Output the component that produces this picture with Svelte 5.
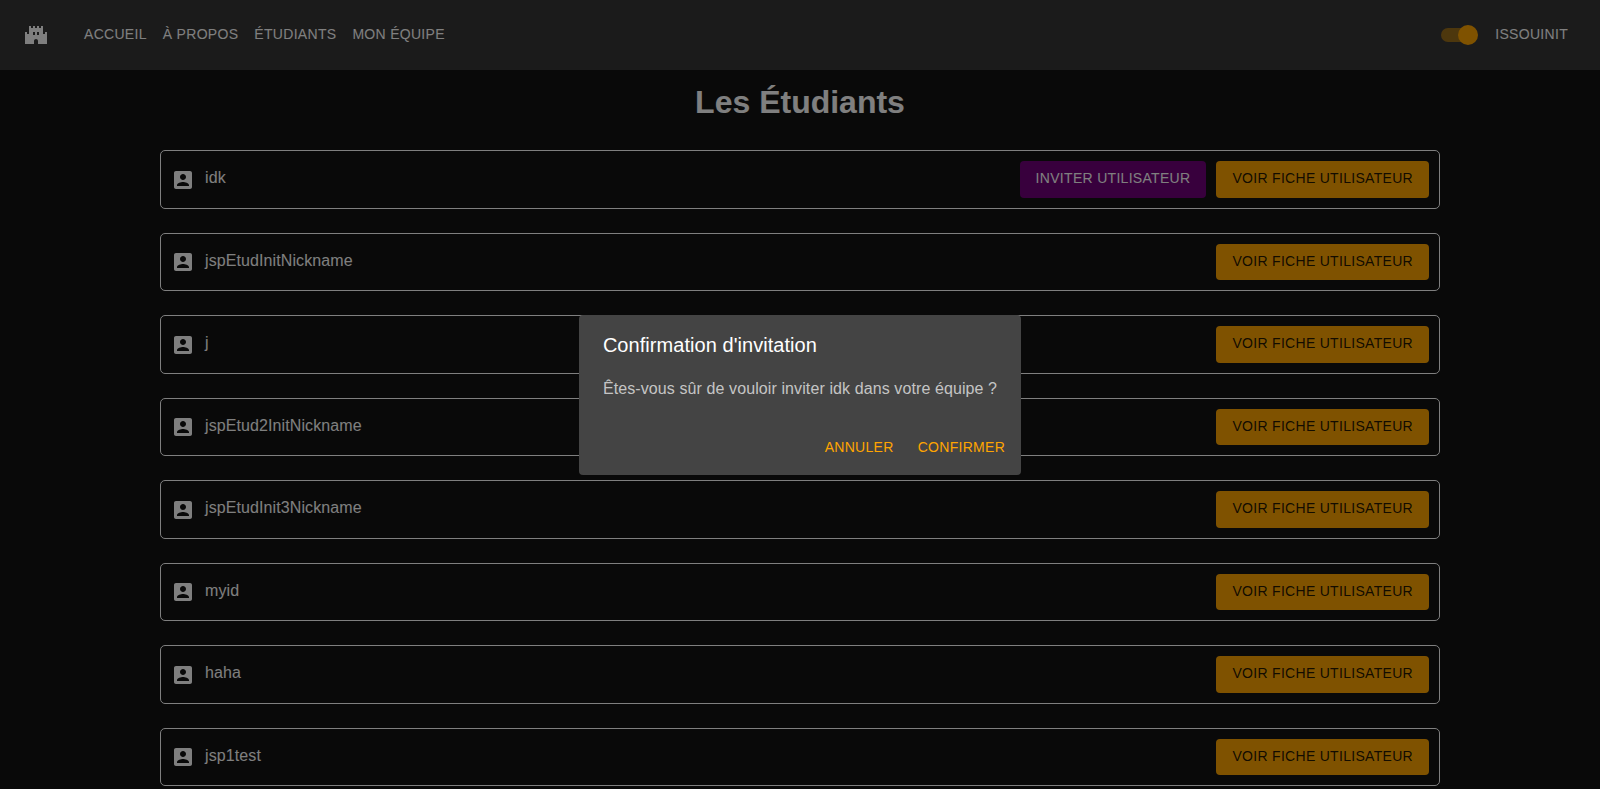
<script>
  const links = ['Accueil', 'À propos', 'Étudiants', 'Mon équipe'];
  const students = [
    { name: 'idk', invite: true },
    { name: 'jspEtudInitNickname' },
    { name: 'j' },
    { name: 'jspEtud2InitNickname' },
    { name: 'jspEtudInit3Nickname' },
    { name: 'myid' },
    { name: 'haha' },
    { name: 'jsp1test' },
  ];
</script>

<div class="page">
  <header class="appbar">
    <svg class="logo" viewBox="0 0 24 24" aria-hidden="true">
      <path d="M21 9v2h-2V3h-2v2h-2V3h-2v2h-2V3H9v2H7V3H5v8H3V9H1v12h9v-3c0-1.1.9-2 2-2s2 .9 2 2v3h9V9h-2zm-10 3H9V9h2v3zm4 0h-2V9h2v3z" />
    </svg>
    <nav class="nav">
      {#each links as link}
        <button class="nav-btn">{link}</button>
      {/each}
    </nav>
    <span class="switch">
      <span class="track"></span>
      <span class="thumb"></span>
    </span>
    <button class="nav-btn">IssouInit</button>
  </header>

  <main class="content">
    <h1 class="title">Les Étudiants</h1>
    <ul class="list">
      {#each students as s}
        <li class="row">
          <div class="who">
            <svg class="avatar" viewBox="0 0 24 24" aria-hidden="true">
              <path d="M19 3H5c-1.11 0-2 .9-2 2v14c0 1.1.89 2 2 2h14c1.1 0 2-.9 2-2V5c0-1.1-.9-2-2-2zm-7 3c1.65 0 3 1.35 3 3 0 1.66-1.35 3-3 3s-3-1.34-3-3c0-1.65 1.35-3 3-3zm6 12H6v-1c0-2 4-3.1 6-3.1s6 1.1 6 3.1v1z" />
            </svg>
            <span class="name">{s.name}</span>
          </div>
          <div class="actions">
            {#if s.invite}
              <button class="btn purple">Inviter utilisateur</button>
            {/if}
            <button class="btn orange">Voir fiche utilisateur</button>
          </div>
        </li>
      {/each}
    </ul>
  </main>
</div>

<div class="backdrop">
  <div class="dialog" role="dialog">
    <h2 class="dialog-title">Confirmation d'invitation</h2>
    <p class="dialog-text">Êtes-vous sûr de vouloir inviter idk dans votre équipe ?</p>
    <div class="dialog-actions">
      <button class="text-btn">Annuler</button>
      <button class="text-btn">Confirmer</button>
    </div>
  </div>
</div>

<style>
  :global(body) {
    margin: 0;
    background: #121212;
    overflow: hidden;
    font-family: "Liberation Sans", Arial, sans-serif;
  }

  button {
    font-family: inherit;
    font-size: 14px;
    line-height: 24.5px;
    letter-spacing: 0.3px;
    text-transform: uppercase;
    border: none;
    background: none;
    cursor: pointer;
  }

  .page {
    height: 789px;
    overflow: hidden;
    color: #fff;
  }

  .appbar {
    height: 70px;
    box-sizing: border-box;
    padding: 0 24px;
    display: flex;
    align-items: center;
    background: #363636;
  }

  .logo {
    width: 24px;
    height: 24px;
    fill: #fff;
    margin-right: 28px;
    flex-shrink: 0;
  }

  .nav {
    display: flex;
    flex: 1;
    margin-bottom: 1px;
  }

  .nav-btn {
    color: #fff;
    padding: 6px 8px;
    margin-bottom: 1px;
  }

  .nav .nav-btn {
    margin-bottom: 0;
  }

  .switch {
    position: relative;
    width: 58px;
    height: 38px;
    flex-shrink: 0;
  }

  .track {
    position: absolute;
    left: 12px;
    top: 12px;
    width: 34px;
    height: 14px;
    border-radius: 7px;
    background: #ffa500;
    opacity: 0.5;
  }

  .thumb {
    position: absolute;
    left: 29px;
    top: 9px;
    width: 20px;
    height: 20px;
    border-radius: 50%;
    background: #ffa500;
  }

  .content {
    padding: 0 160px;
  }

  .title {
    margin: 11px 0 27px;
    font-size: 32px;
    line-height: 42px;
    font-weight: 700;
    text-align: center;
  }

  .list {
    list-style: none;
    margin: 0;
    padding: 0;
    display: flex;
    flex-direction: column;
    gap: 24px;
  }

  .row {
    display: flex;
    align-items: center;
    justify-content: space-between;
    padding: 10px;
    border: 1px solid #fff;
    border-radius: 5px;
  }

  .who {
    display: flex;
    align-items: center;
    gap: 10px;
  }

  .avatar {
    width: 24px;
    height: 24px;
    fill: #fff;
    flex-shrink: 0;
    margin-top: 1px;
  }

  .name {
    font-size: 16px;
    line-height: 24px;
    letter-spacing: 0.1px;
    margin-top: -2px;
  }

  .actions {
    display: flex;
    gap: 10px;
  }

  .btn {
    padding: 5px 16px 7px;
    border-radius: 4px;
  }

  .orange {
    background: #ffa500;
    color: rgba(0, 0, 0, 0.87);
  }

  .purple {
    background: #70007a;
    color: #fff;
  }

  .backdrop {
    position: fixed;
    inset: 0;
    display: flex;
    align-items: center;
    justify-content: center;
    background: rgba(0, 0, 0, 0.5);
  }

  .dialog {
    background: #444;
    border-radius: 4px;
    color: #fff;
  }

  .dialog-title {
    margin: 0;
    padding: 14px 24px 16px;
    font-size: 20px;
    line-height: 32px;
    font-weight: 400;
    letter-spacing: 0.05px;
  }

  .dialog-text {
    margin: 0;
    padding: 0 24px 20.5px;
    font-size: 16px;
    line-height: 24px;
    letter-spacing: 0.1px;
    color: rgba(255, 255, 255, 0.7);
  }

  .dialog-actions {
    display: flex;
    justify-content: flex-end;
    gap: 8px;
    padding: 8px 8px 9px;
  }

  .text-btn {
    padding: 6px 8px;
    color: #ffa500;
  }
</style>
